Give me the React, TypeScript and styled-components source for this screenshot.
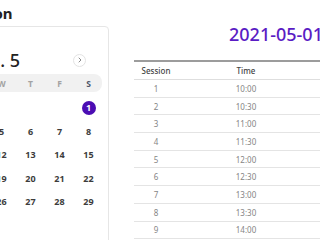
import styled, { createGlobalStyle } from "styled-components";

const GlobalStyle = createGlobalStyle`
  html, body {
    margin: 0;
    padding: 0;
    background: #ffffff;
    overflow: hidden;
  }
  body {
    font-family: "Noto Sans", "Open Sans", sans-serif;
    color: #222;
  }
`;

// the screenshot shows a crop of a wider page, so the page starts off to the left
const Page = styled.div`
  display: flex;
  align-items: flex-start;
  gap: 25px;
  margin-left: -107px;
  width: 640px;
`;

const LeftColumn = styled.div`
  display: flex;
  flex-direction: column;
  width: 216px;
  flex-shrink: 0;
`;

const PageTitle = styled.h2`
  margin: 3px 0 3px;
  padding-left: 2px;
  font-size: 15px;
  line-height: 20px;
  font-weight: 700;
  color: #222;
`;

const Card = styled.div`
  box-sizing: border-box;
  border: 1px solid #e6e6e6;
  border-radius: 4px;
  padding: 20px 6px 40px;
`;

const CalHeader = styled.div`
  display: flex;
  align-items: center;
  height: 26px;
  padding: 0 16px;
  margin-bottom: 1px;
`;

const NavButton = styled.button<{ $hidden?: boolean }>`
  display: flex;
  align-items: center;
  justify-content: center;
  width: 13px;
  height: 13px;
  padding: 0;
  border: 1px solid #e3e3e3;
  border-radius: 50%;
  background: #fff;
  color: #8a8a8a;
  visibility: ${({ $hidden }) => ($hidden ? "hidden" : "visible")};
`;

const MonthTitle = styled.div`
  margin-left: 30px;
  font-size: 18px;
  line-height: 26px;
  font-weight: 500;
  color: #222;
  flex: 1;
`;

const WeekBar = styled.div`
  display: grid;
  grid-template-columns: repeat(7, 29px);
  height: 18px;
  align-items: center;
  background: #f1f1f1;
  border-radius: 8px;
  margin-bottom: 4px;
`;

const WeekDay = styled.span<{ $strong?: boolean }>`
  text-align: center;
  font-size: 8.5px;
  font-weight: 700;
  color: ${({ $strong }) => ($strong ? "#4d566a" : "#a3a3a3")};
`;

const DayGrid = styled.div`
  display: grid;
  grid-template-columns: repeat(7, 29px);
  grid-auto-rows: 23.5px;
`;

const DayCell = styled.div`
  display: flex;
  align-items: center;
  justify-content: center;
`;

const DayNumber = styled.span<{ $selected?: boolean }>`
  display: flex;
  align-items: center;
  justify-content: center;
  width: 14px;
  height: 14px;
  border-radius: 50%;
  font-size: 9px;
  font-weight: 700;
  background: ${({ $selected }) => ($selected ? "#4b0db3" : "transparent")};
  color: ${({ $selected }) => ($selected ? "#ffffff" : "#3c3c3c")};
`;

const RightPanel = styled.div`
  display: flex;
  flex-direction: column;
  width: 284px;
  flex-shrink: 0;
`;

const DateTitle = styled.div`
  margin-top: 21px;
  text-align: center;
  font-size: 18px;
  line-height: 26px;
  font-weight: 500;
  color: #5a1cc4;
`;

const Table = styled.table`
  margin-top: 13px;
  width: 100%;
  border-collapse: collapse;
  border-top: 2px solid #9c9c9c;
`;

const HeadCell = styled.th<{ $width?: number }>`
  width: ${({ $width }) => ($width ? `${$width}px` : "auto")};
  height: 17px;
  padding: 0;
  text-align: center;
  font-size: 8px;
  font-weight: 500;
  color: #444;
  border-bottom: 1px solid #dedede;
`;

const Row = styled.tr`
  height: 17.7px;
`;

const Cell = styled.td`
  padding: 0;
  text-align: center;
  font-size: 8px;
  color: #858585;
  border-bottom: 1px solid #e4e4e4;
`;

const weekDays = ["S", "M", "T", "W", "T", "F", "S"];
const times = ["10:00", "10:30", "11:00", "11:30", "12:00", "12:30", "13:00", "13:30", "14:00", "14:30"];

function Chevron({ dir }: { dir: "left" | "right" }) {
  return (
    <svg width="6" height="6" viewBox="0 0 6 6" fill="none">
      <path
        d={dir === "right" ? "M2 1 L4 3 L2 5" : "M4 1 L2 3 L4 5"}
        stroke="currentColor"
        strokeWidth="1"
        strokeLinecap="round"
        strokeLinejoin="round"
      />
    </svg>
  );
}

export default function App() {
  const firstWeekday = 6; // 2021-05-01 is a Saturday
  const cells: (number | null)[] = [
    ...Array(firstWeekday).fill(null),
    ...Array.from({ length: 31 }, (_, i) => i + 1),
  ];

  return (
    <>
      <GlobalStyle />
      <Page>
        <LeftColumn>
          <PageTitle>Select a Session</PageTitle>
          <Card>
            <CalHeader>
              <NavButton $hidden>
                <Chevron dir="left" />
              </NavButton>
              <MonthTitle>2021. 5</MonthTitle>
              <NavButton>
                <Chevron dir="right" />
              </NavButton>
            </CalHeader>
            <WeekBar>
              {weekDays.map((d, i) => (
                <WeekDay key={i} $strong={i === 6}>
                  {d}
                </WeekDay>
              ))}
            </WeekBar>
            <DayGrid>
              {cells.map((day, i) => (
                <DayCell key={i}>
                  {day && <DayNumber $selected={day === 1}>{day}</DayNumber>}
                </DayCell>
              ))}
            </DayGrid>
          </Card>
        </LeftColumn>
        <RightPanel>
          <DateTitle>2021-05-01</DateTitle>
          <Table>
            <thead>
              <tr>
                <HeadCell $width={44}>Session</HeadCell>
                <HeadCell $width={136}>Time</HeadCell>
                <HeadCell>Status</HeadCell>
              </tr>
            </thead>
            <tbody>
              {times.map((t, i) => (
                <Row key={t}>
                  <Cell>{i + 1}</Cell>
                  <Cell>{t}</Cell>
                  <Cell>Available</Cell>
                </Row>
              ))}
            </tbody>
          </Table>
        </RightPanel>
      </Page>
    </>
  );
}
